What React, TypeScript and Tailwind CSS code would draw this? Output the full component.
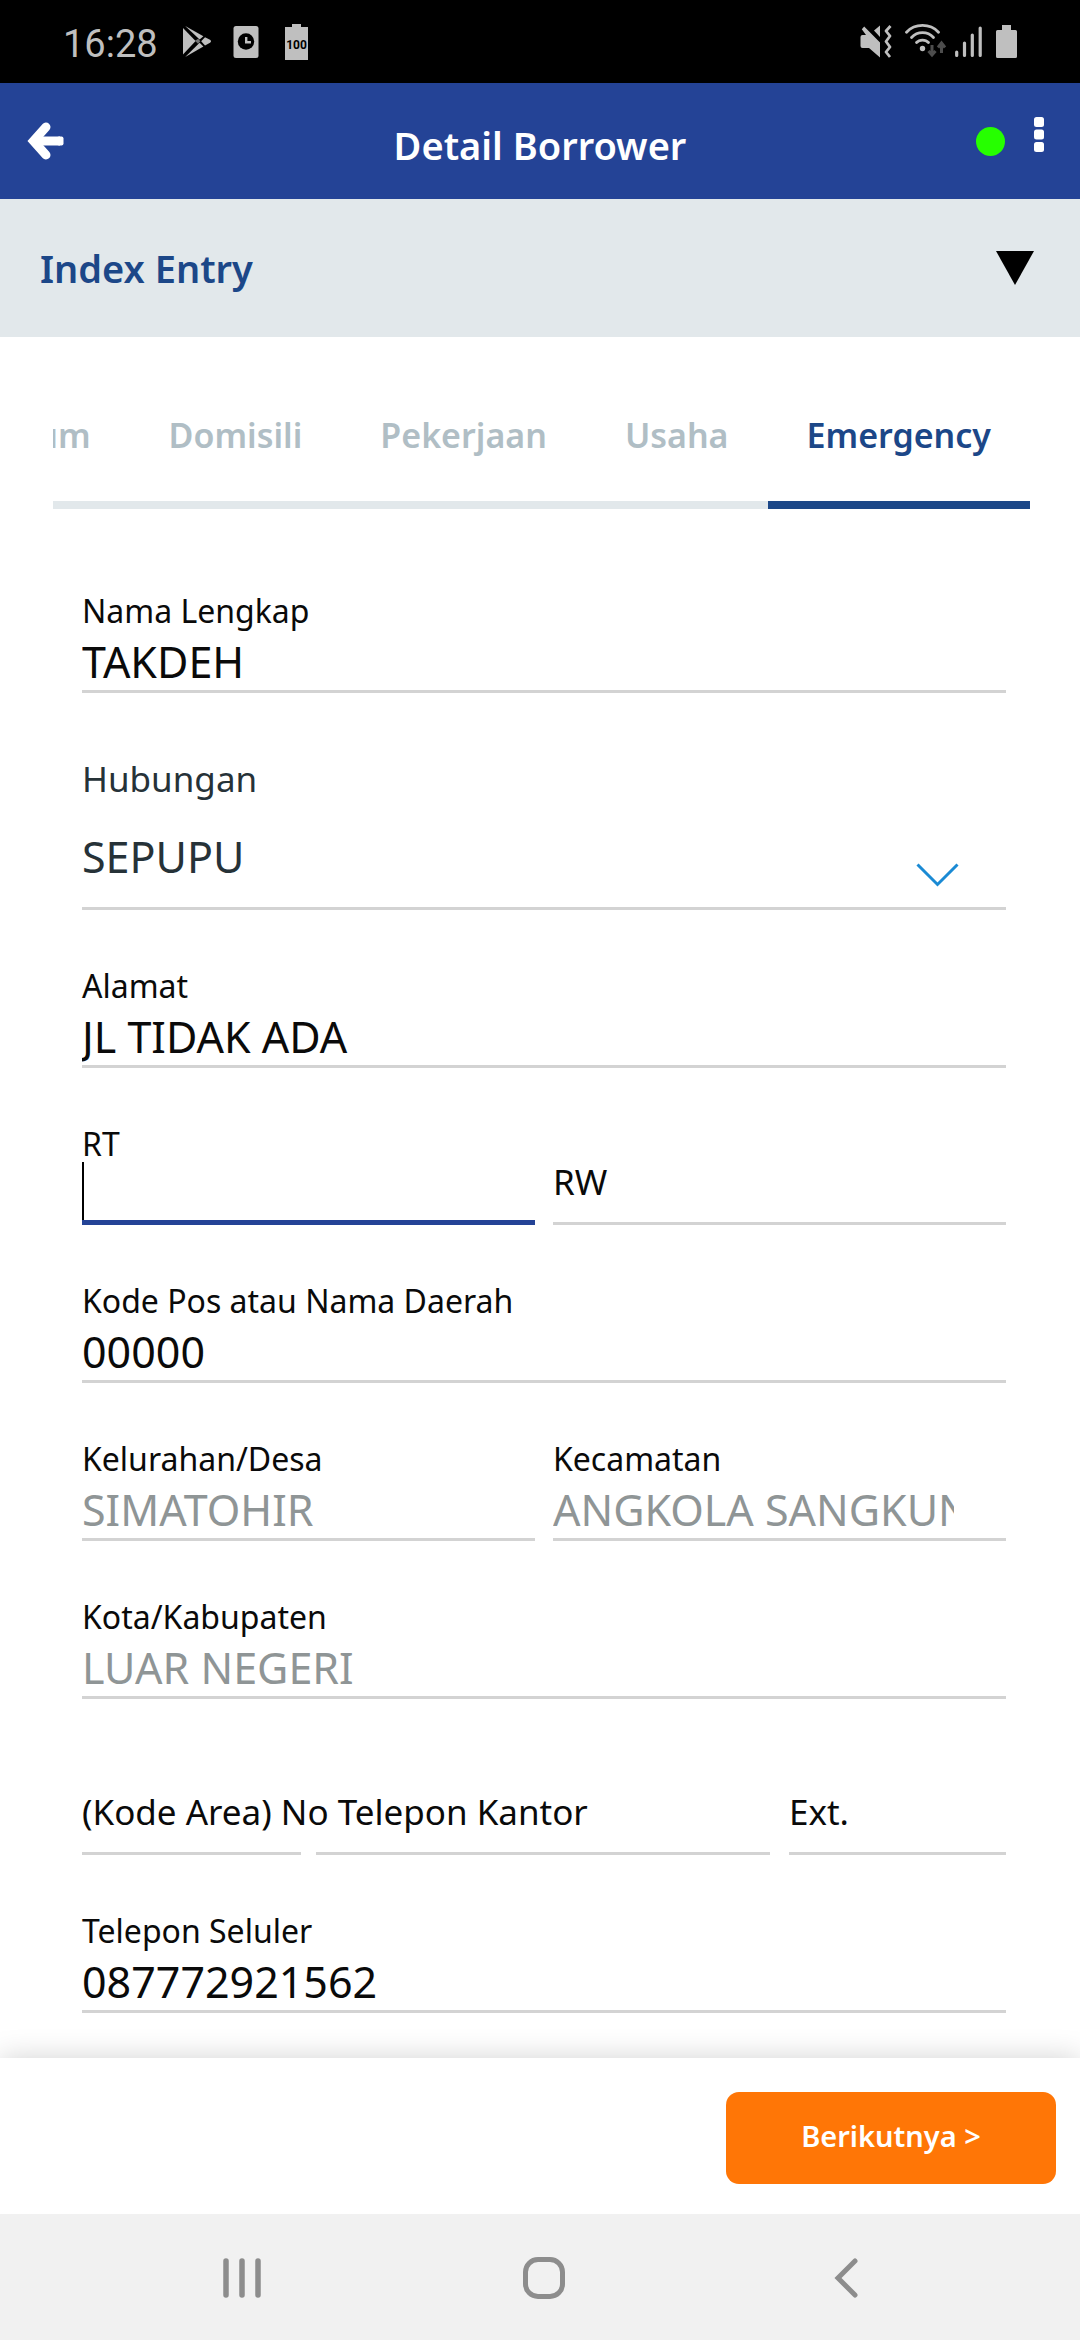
import { useState } from "react";
import type { ReactNode } from "react";

const labelText = "text-[32px] leading-[36px]";
const valueText = "text-[43px]";

function StatusBar() {
  return (
    <div className="flex h-[83px] items-center justify-between bg-black px-[63px] text-[#bfbfbf]">
      <div className="flex items-center">
        <span className="w-[119px] pt-1 font-[Roboto,sans-serif] text-[38px] leading-[48px]">16:28</span>
        <svg className="h-9 w-[30px]" viewBox="182 25 30 36" fill="currentColor" aria-hidden="true">
          <path d="M183 29 195.600 42 183 55.500Z" />
          <path d="M185.200 27 203.400 37.300 199.600 40.600Z" />
          <path d="M185.200 58 203.400 47.400 199.600 43.800Z" />
          <path d="M205 38.200 210 40.800Q212 42.200 210 43.800L205 46.600 201.200 42.200Z" />
          <path d="M195 41.800 198.200 39.800 200.300 42.200 198 44.700Z" opacity="0.6" />
        </svg>
        <svg className="ml-[21px] h-9 w-[26px]" viewBox="233 25 26 36" aria-hidden="true">
          <rect x="233.5" y="27" width="25" height="32" rx="2.5" fill="currentColor" />
          <circle cx="246" cy="42.500" r="8.2" fill="#000" />
          <path d="M246.2 38V43.2H251" fill="none" stroke="currentColor" strokeWidth="2.4" />
        </svg>
        <svg className="ml-[26px] h-9 w-[23px]" viewBox="285 25 23 36" aria-hidden="true">
          <path d="M292 25h9v3h7v33h-23V28h7Z" fill="currentColor" />
          <text x="296.5" y="50" textAnchor="middle" fontFamily="Roboto, sans-serif" fontWeight="700" fontSize="12" fill="#000">
            100
          </text>
        </svg>
      </div>
      <div className="flex items-center">
        <svg className="h-9 w-[32px]" viewBox="860 25 32 36" aria-hidden="true">
          <path d="M860.5 38Q860.5 36 862.5 36H866L861.8 30.2 864.2 27.6 880 43.5V58.5L869 49H862.5Q860.5 49 860.5 47Z" fill="currentColor" />
          <path d="M874 31.5 880 26.5V38Z" fill="currentColor" />
          <path d="M890.5 27 886 32 890 37 886 42.5 890 48 886 53 890 58" fill="none" stroke="currentColor" strokeWidth="2.8" strokeLinejoin="round" />
        </svg>
        <svg className="ml-[13px] h-9 w-[42px]" viewBox="905 25 42 36" fill="none" aria-hidden="true">
          <g stroke="currentColor" strokeWidth="2.8" strokeLinecap="round">
            <path d="M906.5 33.2C915 24.2 930 24.2 938.5 33.2" />
            <path d="M911.5 38.5C917.5 32 927.5 32 933.5 38.5" />
            <path d="M916.5 43.5C919.5 40.2 925.5 40.2 928.5 43.5" />
          </g>
          <circle cx="922.5" cy="49.5" r="2.7" fill="currentColor" />
          <path d="M932 46V56M928.5 52 932 56 935.5 52M941.5 54V44M938 48.5 941.5 44 945 48.5" stroke="#4d4d4d" strokeWidth="3" />
        </svg>
        <svg className="ml-2 h-9 w-[28px]" viewBox="955 25 28 36" fill="none" stroke="currentColor" strokeWidth="3.2" strokeLinecap="round" aria-hidden="true">
          <path d="M956.7 53V56.5M964.5 44V56.5M972.3 36V56.5M980.2 29V56.5" />
        </svg>
        <svg className="ml-[13px] h-9 w-[21px]" viewBox="996 25 21 36" fill="currentColor" aria-hidden="true">
          <path d="M1002 26h9v5h4.5q1.5 0 1.5 1.5V57.5q0 1.5-1.5 1.5H997.5q-1.5 0-1.5-1.5V32.5q0-1.5 1.5-1.5H1002Z" />
        </svg>
      </div>
    </div>
  );
}

function Header() {
  return (
    <header className="grid h-[116px] grid-cols-[1fr_auto_1fr] items-center bg-[#244396] px-[26px] text-white">
      <button type="button" aria-label="Kembali" className="justify-self-start">
        <svg className="h-[40px] w-[38px]" viewBox="0 0 38 40" fill="none" stroke="currentColor" aria-hidden="true">
          <path d="M20 6 7.5 20 20 34" strokeWidth="9" strokeLinecap="round" strokeLinejoin="miter" />
          <path d="M9 20H34" strokeWidth="9" />
          <rect x="31" y="15.5" width="6.5" height="9" rx="2" fill="currentColor" stroke="none" />
        </svg>
      </button>
      <h1 className="pt-2 text-[38px] leading-[52px] font-semibold">Detail Borrower</h1>
      <div className="flex items-center justify-self-end pr-[10px]">
        <span className="size-[29px] rounded-full bg-[#26ff00]" />
        <button type="button" aria-label="Menu" className="mb-[14px] ml-[29px]">
          <svg className="h-[35px] w-[10px]" viewBox="0 0 10 35" fill="currentColor" aria-hidden="true">
            <rect width="10" height="10" rx="2.5" />
            <rect y="12.5" width="10" height="10" rx="2.5" />
            <rect y="25" width="10" height="10" rx="2.5" />
          </svg>
        </button>
      </div>
    </header>
  );
}

const tabs = ["Umum", "Domisili", "Pekerjaan", "Usaha", "Emergency"];

function Tabs() {
  const [active, setActive] = useState("Emergency");
  return (
    <div role="tablist" className="mr-[50px] ml-[53px] flex h-[172px] justify-end overflow-hidden">
      {tabs.map((tab) => (
        <button
          key={tab}
          type="button"
          role="tab"
          aria-selected={tab === active}
          onClick={() => setActive(tab)}
          className={
            tab === active
              ? "shrink-0 border-b-8 border-[#1c4788] px-[39px] pt-14 pb-6 text-[34px] font-semibold text-[#1c4788]"
              : "shrink-0 border-b-8 border-[#e2e8eb] px-[39px] pt-14 pb-6 text-[34px] font-semibold text-[#b0bec5]"
          }
        >
          {tab}
        </button>
      ))}
    </div>
  );
}

function Field({ id, label, value, disabled, className = "" }: { id: string; label: string; value: string; disabled?: boolean; className?: string }) {
  return (
    <div className="flex min-w-0 flex-col gap-2">
      <label htmlFor={id} className={labelText}>
        {label}
      </label>
      <input
        id={id}
        defaultValue={value}
        disabled={disabled}
        className={`h-[56px] w-full border-b-3 border-[#d3d3d3] bg-transparent pb-0.5 outline-none disabled:text-[#8f9596] ${valueText} ${className}`}
      />
    </div>
  );
}

function RestingLabel({ id, children }: { id: string; children: ReactNode }) {
  return (
    <label htmlFor={id} className="text-[35px] leading-[44px] whitespace-nowrap">
      {children}
    </label>
  );
}

const restingInput = "h-[21px] w-full min-w-0 border-b-3 border-[#d3d3d3] bg-transparent outline-none";

function BorrowerForm() {
  return (
    <form className="flex grow flex-col gap-[58px] pt-[84px] pr-[74px] pl-[82px] text-[#0a0a0a]">
      <Field id="nama" label="Nama Lengkap" value="TAKDEH" />
      <div className="relative flex flex-col text-[#263238]">
        <label htmlFor="hubungan" className="mb-6 text-[35px] leading-[56px]">
          Hubungan
        </label>
        <select id="hubungan" defaultValue="SEPUPU" className="h-[79px] w-full appearance-none border-b-3 border-[#d3d3d3] bg-transparent pb-6 text-[43px] leading-[52px] outline-none">
          <option>SEPUPU</option>
        </select>
        <svg className="pointer-events-none absolute right-[47px] bottom-[23px] h-6 w-[43px]" viewBox="0 0 43 24" fill="none" stroke="#1a8ad4" strokeWidth="3" aria-hidden="true">
          <path d="M1.5 1.5 21.5 21.5 41.5 1.5" />
        </svg>
      </div>
      <Field id="alamat" label="Alamat" value="JL TIDAK ADA" />
      <div className="grid grid-cols-2 gap-[18px]">
        <div className="relative flex min-w-0 flex-col gap-2">
          <label htmlFor="rt" className={labelText}>
            RT
          </label>
          <input id="rt" className="h-[55px] w-full border-b-5 border-[#244396] bg-transparent text-[43px] outline-none" />
          <span className="absolute bottom-[5px] left-0 h-[58px] w-[2px] bg-black" />
        </div>
        <div className="flex min-w-0 flex-col justify-end">
          <RestingLabel id="rw">RW</RestingLabel>
          <input id="rw" className={restingInput} />
        </div>
      </div>
      <Field id="kodepos" label="Kode Pos atau Nama Daerah" value="00000" />
      <div className="grid grid-cols-2 gap-[18px]">
        <Field id="kelurahan" label="Kelurahan/Desa" value="SIMATOHIR" disabled />
        <Field id="kecamatan" label="Kecamatan" value="ANGKOLA SANGKUNUR" disabled className="pr-[52px]" />
      </div>
      <Field id="kota" label="Kota/Kabupaten" value="LUAR NEGERI" disabled />
      <div className="grid grid-cols-[688fr_217fr] gap-[19px] pt-[33px]">
        <div className="flex min-w-0 flex-col">
          <RestingLabel id="telepon">(Kode Area) No Telepon Kantor</RestingLabel>
          <div className="grid grid-cols-[219fr_454fr] gap-[15px]">
            <input aria-label="Kode Area" className={restingInput} />
            <input id="telepon" className={restingInput} />
          </div>
        </div>
        <div className="flex min-w-0 flex-col">
          <RestingLabel id="ext">Ext.</RestingLabel>
          <input id="ext" className={restingInput} />
        </div>
      </div>
      <Field id="seluler" label="Telepon Seluler" value="087772921562" />
    </form>
  );
}

function NavigationBar() {
  return (
    <nav className="grid h-[126px] grid-cols-3 items-center justify-items-center bg-[#f1f1f1] pt-0.5 pr-[83px] pl-[91px] text-[#8d8d8d]">
      <button type="button" aria-label="Aplikasi terbaru">
        <svg className="h-[42px] w-[38px]" viewBox="0 0 38 42" stroke="currentColor" strokeWidth="5.5" strokeLinecap="round" aria-hidden="true">
          <path d="M3 4V38M19 4V38M35 4V38" />
        </svg>
      </button>
      <button type="button" aria-label="Beranda">
        <svg className="size-[42px]" viewBox="0 0 42 42" fill="none" stroke="currentColor" strokeWidth="5" aria-hidden="true">
          <rect x="2.5" y="2.5" width="37" height="37" rx="12.5" />
        </svg>
      </button>
      <button type="button" aria-label="Kembali ke layar sebelumnya">
        <svg className="h-[42px] w-6" viewBox="0 0 24 42" fill="none" stroke="currentColor" strokeWidth="5" strokeLinecap="round" aria-hidden="true">
          <path d="M21 4 4 21 21 38" />
        </svg>
      </button>
    </nav>
  );
}

export default function App() {
  return (
    <div className="flex min-h-screen flex-col bg-white font-['Noto_Sans',sans-serif]">
      <StatusBar />
      <Header />
      <button type="button" className="flex h-[138px] items-center justify-between bg-[#e2e8eb] pr-[46px] pl-[40px] text-left">
        <span className="text-[38px] leading-[52px] font-semibold text-[#1c4788]">Index Entry</span>
        <svg className="h-[34px] w-[38px]" viewBox="0 0 38 34" aria-hidden="true">
          <path d="M0 0H38L19 34Z" />
        </svg>
      </button>
      <main className="flex grow flex-col">
        <Tabs />
        <BorrowerForm />
      </main>
      <footer className="flex h-[156px] items-center justify-end bg-white px-6 pt-1 shadow-[0_0_28px_rgba(0,0,0,0.18)]">
        <button type="button" className="h-[92px] w-[330px] rounded-[13px] bg-[#ff7606] pb-1 text-[29px] font-semibold text-white">
          Berikutnya &gt;
        </button>
      </footer>
      <NavigationBar />
    </div>
  );
}
